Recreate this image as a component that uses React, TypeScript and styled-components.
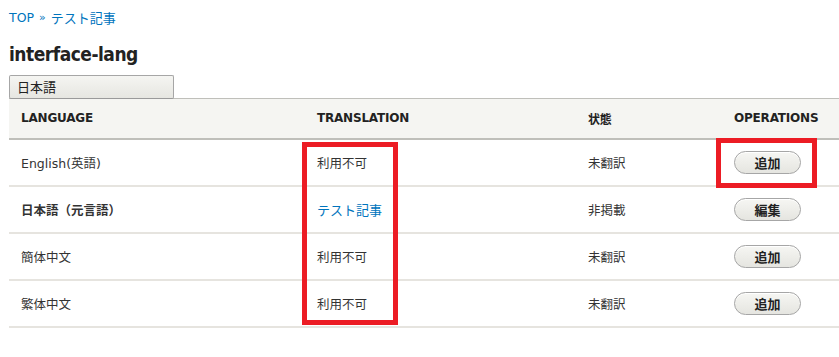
import React from "react";
import styled, { createGlobalStyle } from "styled-components";

const Global = createGlobalStyle`
  html, body { margin: 0; padding: 0; background: #fff; }
  body {
    font-family: "DejaVu Sans", "Noto Sans CJK JP", sans-serif;
    color: #333;
    font-size: 13px;
  }
`;

const Page = styled.div`
  position: relative;
  width: 839px;
  height: 357px;
  overflow: hidden;
  padding-left: 9px;
  box-sizing: border-box;
`;

const Breadcrumb = styled.nav`
  display: flex;
  align-items: center;
  gap: 5px;
  padding-top: 9px;
  height: 17px;
  font-size: 12.5px;
  color: #0074bd;
  font-family: "DejaVu Sans", "Noto Sans CJK JP", sans-serif;
`;

const Sep = styled.span`
  color: #0074bd;
  font-size: 11px;
`;

const Crumb = styled.a`
  color: #0074bd;
  text-decoration: none;
  font-size: 13px;
  font-family: "Noto Sans CJK JP", sans-serif;
`;

const Title = styled.h1`
  margin: 17px 0 0 0;
  font-size: 19px;
  line-height: 22px;
  font-weight: bold;
  color: #222;
  letter-spacing: -0.5px;
  font-family: "DejaVu Sans Condensed", "DejaVu Sans", sans-serif;
`;

const LangSelect = styled.div`
  margin-top: 10px;
  width: 165px;
  height: 24px;
  box-sizing: border-box;
  border: 1px solid #a6a6a6;
  border-bottom-color: #9a9a9a;
  border-radius: 2px;
  background: linear-gradient(#f5f5f2, #e6e6e1);
  font-family: "Noto Sans CJK JP", sans-serif;
  font-size: 13px;
  line-height: 22px;
  padding-left: 7px;
  color: #222;
  position: relative;
  z-index: 1;
`;

const Table = styled.table`
  width: 830px;
  border-collapse: collapse;
  border-top: 1px solid #bfbfba;
  margin-top: -1px;
`;

const HeadRow = styled.tr`
  background: #f5f5f2;
  border-bottom: 2px solid #bfbfba;
`;

const Th = styled.th<{ $w: number }>`
  width: ${(p) => p.$w}px;
  height: 40px;
  padding: 0 12px;
  box-sizing: border-box;
  text-align: left;
  font-family: "DejaVu Sans", "Noto Sans CJK JP", sans-serif;
  font-size: 12px;
  font-weight: bold;
  color: #222;
  letter-spacing: -0.2px;
  vertical-align: middle;
`;

const Row = styled.tr`
  border-bottom: 2px solid #e6e4df;
`;

const Td = styled.td<{ $bold?: boolean }>`
  height: 45px;
  padding: 0 12px;
  vertical-align: middle;
  font-family: "DejaVu Sans", "Noto Sans CJK JP", sans-serif;
  font-size: 12.5px;
  font-weight: ${(p) => (p.$bold ? "bold" : "normal")};
  color: #333;
`;

const Link = styled.a`
  color: #0074bd;
  text-decoration: none;
  font-family: "Noto Sans CJK JP", sans-serif;
  font-size: 13px;
`;

const Button = styled.button`
  width: 67px;
  height: 23px;
  border: 1px solid #a6a6a6;
  border-radius: 12px;
  background: linear-gradient(#f6f6f3, #e5e5e0);
  font-family: "Noto Sans CJK JP", sans-serif;
  font-size: 13px;
  font-weight: bold;
  color: #222;
  padding: 0;
  line-height: 21px;
  box-shadow: inset 0 1px 0 #fff;
`;

const Highlight = styled.div<{ $x: number; $y: number; $w: number; $h: number }>`
  position: absolute;
  left: ${(p) => p.$x}px;
  top: ${(p) => p.$y}px;
  width: ${(p) => p.$w}px;
  height: ${(p) => p.$h}px;
  box-sizing: border-box;
  border: 5px solid #ec1c24;
  pointer-events: none;
`;

type R = { lang: string; bold?: boolean; trans: string; link?: boolean; state: string; op: string };

const rows: R[] = [
  { lang: "English(英語)", trans: "利用不可", state: "未翻訳", op: "追加" },
  { lang: "日本語（元言語）", bold: true, trans: "テスト記事", link: true, state: "非掲載", op: "編集" },
  { lang: "簡体中文", trans: "利用不可", state: "未翻訳", op: "追加" },
  { lang: "繁体中文", trans: "利用不可", state: "未翻訳", op: "追加" },
];

export default function App() {
  return (
    <>
      <Global />
      <Page>
        <Breadcrumb>
          <span>TOP</span>
          <Sep>»</Sep>
          <Crumb>テスト記事</Crumb>
        </Breadcrumb>
        <Title>interface-lang</Title>
        <LangSelect>日本語</LangSelect>
        <Table>
          <thead>
            <HeadRow>
              <Th $w={296}>LANGUAGE</Th>
              <Th $w={271}>TRANSLATION</Th>
              <Th $w={146}>状態</Th>
              <Th $w={117}>OPERATIONS</Th>
            </HeadRow>
          </thead>
          <tbody>
            {rows.map((r) => (
              <Row key={r.lang}>
                <Td $bold={r.bold}>{r.lang}</Td>
                <Td>{r.link ? <Link>{r.trans}</Link> : r.trans}</Td>
                <Td>{r.state}</Td>
                <Td>
                  <Button>{r.op}</Button>
                </Td>
              </Row>
            ))}
          </tbody>
        </Table>
        <Highlight $x={302} $y={142} $w={96} $h={183} />
        <Highlight $x={716} $y={138} $w={101} $h={50} />
      </Page>
    </>
  );
}
